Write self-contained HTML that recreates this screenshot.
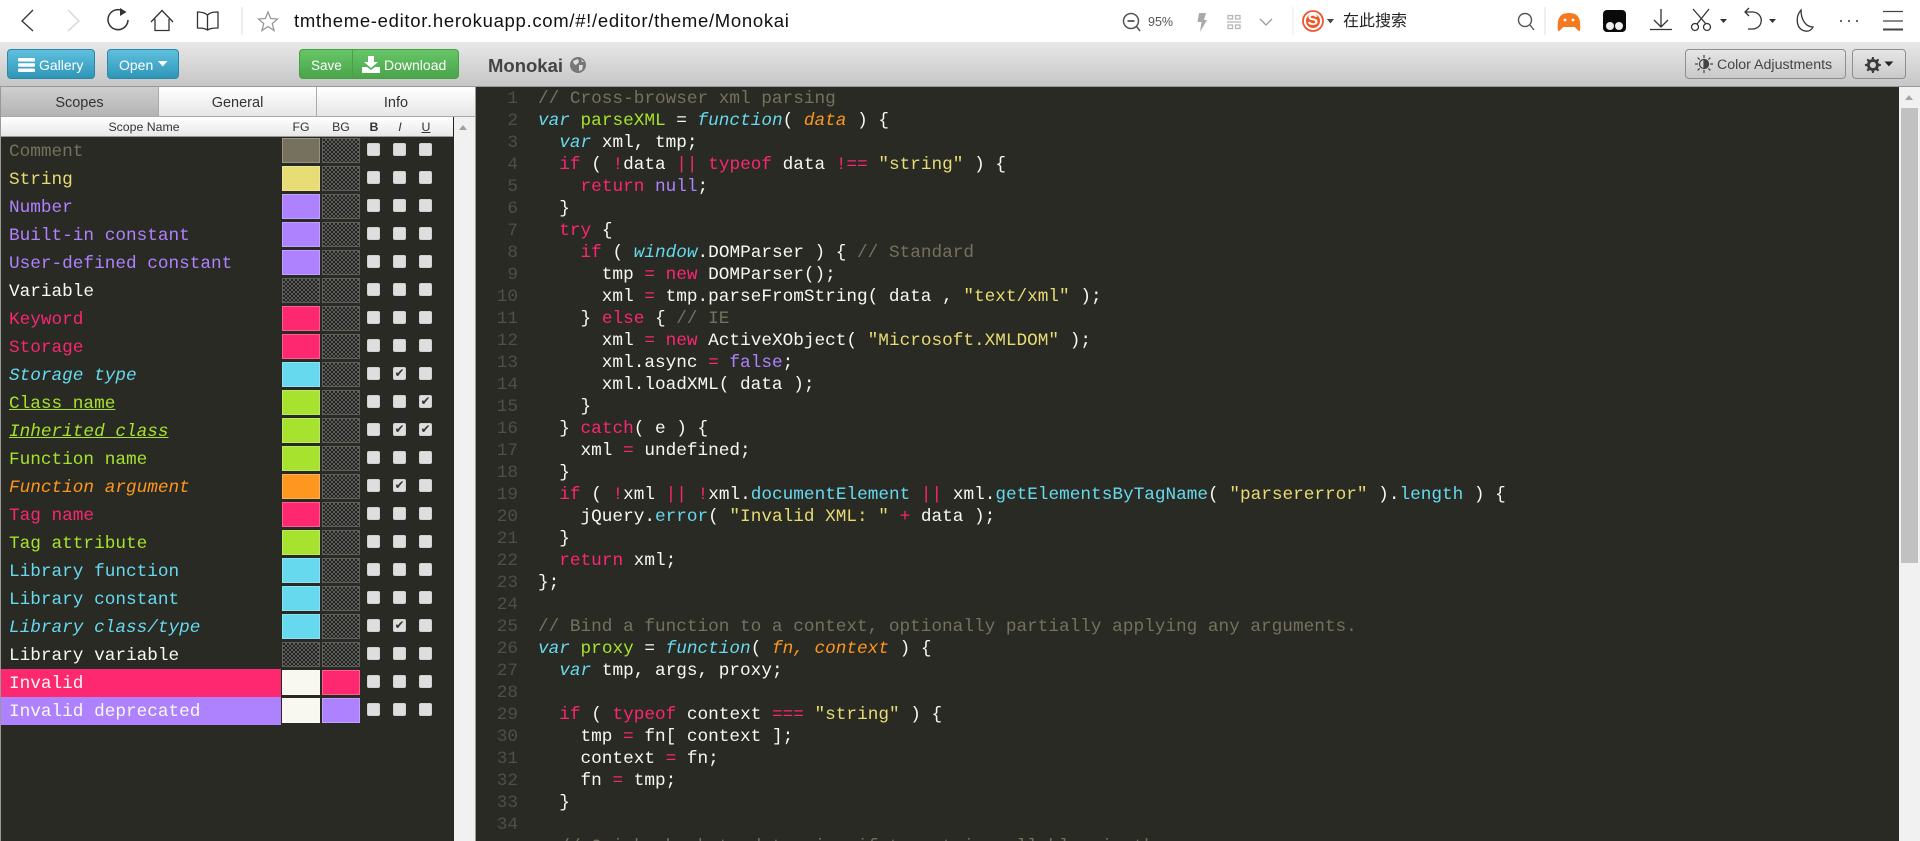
<!DOCTYPE html>
<html lang="en"><head><meta charset="utf-8"><title>Monokai</title>
<style>
html,body{margin:0;padding:0;width:1920px;height:841px;overflow:hidden;background:#292a23}
body{position:relative;font-family:"Liberation Sans","Noto Sans CJK SC",sans-serif}
.abs,.btn,.tab,.h,.row,.sw,.cb,.ln,.cl{position:absolute}
#bar{left:0;top:0;width:1920px;height:42px;background:#fff}
#tb{left:0;top:42px;width:1920px;height:44px;background:linear-gradient(#e8e8e8,#c6c6c6);border-bottom:1px solid #999}
.btn{top:49px;height:30px;box-sizing:border-box;border-radius:4px;color:#fff;font-size:14px;line-height:31px;white-space:nowrap}
.blue{background:linear-gradient(#5fc0de,#2f96b8);border:1px solid #2b88a8}
.green{background:linear-gradient(#66c566,#4ba44b);border:1px solid #46a046}
.gray{background:linear-gradient(#e6e6e6,#cacaca);border:1px solid #8e8e8e;color:#444}
.tab{top:87px;height:29px;box-sizing:border-box;text-align:center;font-size:14.5px;line-height:33px;color:#333;background:linear-gradient(#fff,#e6e6e6);border-right:1px solid #aaa}
.h{top:117px;height:19px;font-size:12.3px;line-height:21px;color:#333;text-align:center}
.row{left:1px;width:280px;height:28px;font:17.73px/31px "Liberation Mono",monospace;padding-left:8px;box-sizing:border-box;white-space:pre}
.sw{width:38px;height:25px;box-sizing:border-box;border:1px solid rgba(255,255,255,.25)}
.t{border:1px solid #5e5f59;background:conic-gradient(#5c5c5c 25%,#23231f 0 50%,#5c5c5c 0 75%,#23231f 0) 0 0/4px 4px}
.cb{width:13px;height:13px;background:#dedede;border-radius:2px;box-shadow:inset 0 0 1px #888;color:#333;font-size:12px;line-height:13px;text-align:center}
.ln{left:476px;width:42px;height:22px;text-align:right;font:17.73px/24px "Liberation Mono",monospace;color:#4e4f48}
.cl{left:538px;height:22px;font:17.73px/24px "Liberation Mono",monospace;color:#f8f8f2;white-space:pre}
.k{color:#f92672}.c{color:#75715e}.s{color:#e6db74}.n{color:#ae81ff}.v{color:#66d9ef;font-style:italic}.g{color:#a6e22e}.a{color:#fd971f;font-style:italic}.b{color:#66d9ef}
</style></head><body>
<div class="abs" id="bar">
<svg class="abs" style="left:0;top:0" width="1920" height="42" fill="none" stroke="#333" stroke-width="1.3">
<path d="M33 10 L22 21 L33 31"/>
<path d="M68 10 L79 21 L68 31" stroke="#d4d4d4"/>
<path d="M125 12.5 A10 10 0 1 0 128 20" stroke-width="1.5"/><path d="M120 8 L126.5 12 L120 16 Z" fill="#333" stroke="none"/>
<path d="M151 22 L162 10.5 L173 22 M155 19 V30.5 H169 V19"/>
<path d="M207.500 15 C204 12 200 12 197.500 12 V28 C201 28 204 28 207.500 30 C211 28 214 28 218 28 V12 C214 12 211 12 207.500 15 V30"/>
<path d="M242 7 V35" stroke="#e4e4e4"/>
<path d="M268 12 L270.700 18.500 L277.500 19 L272.300 23.500 L274 30.500 L268 26.500 L262 30.500 L263.700 23.500 L258.500 19 L265.300 18.500 Z" stroke="#999"/>
<circle cx="1131" cy="21" r="7.500" stroke="#555" stroke-width="1.500"/><path d="M1127.500 21 H1134.500" stroke="#555" stroke-width="1.800"/><path d="M1136.500 26.500 L1140 31" stroke="#555" stroke-width="1.500"/>
<path d="M1199 13 H1206 L1204 20 H1207 L1200 32 L1201.500 22 H1197.500 Z" fill="#aaa" stroke="none"/>
<path d="M1228 15.500 H1232.500 V19 H1228 Z M1235.500 15.500 H1240 V19 H1235.500 Z M1228 25 H1232.500 V28.500 H1228 Z M1235.500 25 H1240 V28.500 H1235.500 Z M1227 22 H1241" stroke="#b5b5b5" stroke-width="1.300"/>
<path d="M1260 19 L1266 25 L1272 19" stroke="#999"/>
<path d="M1293 7 V35" stroke="#eee"/>
<circle cx="1313" cy="21" r="10" stroke="#f0562a" stroke-width="1.800"/><circle cx="1313" cy="21" r="7" fill="#f0562a" stroke="none"/>
<path d="M1327 19 H1334 L1330.500 23.500 Z" fill="#444" stroke="none"/>
<circle cx="1525" cy="20" r="6.500" stroke="#555" stroke-width="1.400"/><path d="M1530 25 L1534 30" stroke="#555" stroke-width="1.400"/>
<path d="M1545 7 V35" stroke="#e6e6e6"/>
<path d="M1558 31 C1557 21 1558 13 1569 13 C1580 13 1581 21 1580 31 C1577 31 1576 27 1574 27 H1564 C1562 27 1561 31 1558 31 Z" fill="#f5791f" stroke="none"/>
<circle cx="1565" cy="20" r="1.400" fill="#fff" stroke="none"/><circle cx="1573" cy="20" r="1.400" fill="#fff" stroke="none"/>
<rect x="1603" y="10" width="23" height="22" rx="4" fill="#0a0a0a" stroke="none"/><circle cx="1610" cy="26" r="4" fill="#eee" stroke="none"/><circle cx="1619" cy="26" r="4" fill="#eee" stroke="none"/>
<path d="M1661 9 V26 M1654 20 L1661 27 L1668 20 M1650 29.500 H1672"/>
<path d="M1693 9 L1706 24 M1709 9 L1697 24"/><circle cx="1695" cy="27" r="3.500"/><circle cx="1707" cy="27" r="3.500"/>
<path d="M1720 19 H1727 L1723.500 23 Z" fill="#333" stroke="none"/>
<path d="M1745 12 H1753 C1764 13 1764 28 1753 29 H1748 M1749 8 L1745 12 L1749 16"/>
<path d="M1769 19 H1776 L1772.500 23 Z" fill="#333" stroke="none"/>
<path d="M1801 10 C1795 17 1796 29 1805 31 C1810 32 1812 29 1813 27 C1806 27 1801 20 1801 10 Z"/>
<circle cx="1841" cy="21" r="1" fill="#333" stroke="none"/><circle cx="1849" cy="21" r="1" fill="#333" stroke="none"/><circle cx="1857" cy="21" r="1" fill="#333" stroke="none"/>
<path d="M1883 11.500 H1903 M1883 21 H1903" stroke="#444" stroke-width="1.300"/><path d="M1883 29.500 H1903" stroke="#444" stroke-width="2"/>
</svg>
<span class="abs" style="left:294px;top:10px;font-size:18.5px;letter-spacing:.69px;line-height:22px;color:#111;white-space:nowrap">tmtheme-editor.herokuapp.com/#!/editor/theme/Monokai</span>
<span class="abs" style="left:1148px;top:14px;font-size:12.500px;line-height:16px;color:#555">95%</span>
<span class="abs" style="left:1307.500px;top:12px;font-size:16px;line-height:18px;font-weight:bold;color:#fff">S</span>
<span class="abs" style="left:1343px;top:13px;font-size:16px;line-height:18px;color:#222;white-space:nowrap">在此搜索</span>
</div>
<div class="abs" id="tb"></div>

<div class="btn blue" style="left:7px;width:88px;padding-left:31px">Gallery
<svg class="abs" style="left:10px;top:8px" width="18" height="14" fill="#fff"><rect width="17" height="3.500" rx="1"/><rect y="5.300" width="17" height="3.500" rx="1"/><rect y="10.500" width="17" height="3.500" rx="1"/></svg></div>
<div class="btn blue" style="left:107px;width:72px;padding-left:11px">Open
<svg class="abs" style="left:50px;top:11px" width="10" height="6" fill="#fff"><path d="M0 0 H9.500 L4.700 5.500 Z"/></svg></div>
<div class="btn green" style="left:299px;width:54px;padding-left:11px;border-radius:4px 0 0 4px;font-size:13.500px">Save</div>
<div class="btn green" style="left:352px;width:107px;padding-left:31px;border-radius:0 4px 4px 0">Download
<svg class="abs" style="left:9px;top:6px" width="18" height="17" fill="#fff"><path d="M6 0 H12 V6 H16 L9 12 L2 6 H6 Z"/><path d="M0 11 H5 L9 14 L13 11 H18 V17 H0 Z"/></svg></div>

<div class="abs" style="left:488px;top:53px;font-size:18.500px;line-height:26px;font-weight:bold;color:#444">Monokai</div>
<svg class="abs" style="left:569px;top:56px" width="18" height="18"><circle cx="9" cy="9" r="8" fill="#777"/><path d="M4 5 L9 3 L10 6 L7 9 L5 8 Z M10 9 L14 9 L13 14 L10 15 Z M12 3 L15 6 L13 6 Z" fill="#ddd"/></svg>
<div class="btn gray" style="left:1685px;width:161px;padding-left:31px;font-size:14.2px">Color Adjustments
<svg class="abs" style="left:9px;top:5px" width="18" height="18" fill="none" stroke="#444" stroke-width="1.200"><circle cx="9" cy="9" r="4.500"/><path d="M9 4.500 A4.500 4.500 0 0 1 9 13.500 Z" fill="#444"/><path d="M9 0 V3 M9 15 V18 M0 9 H3 M15 9 H18 M2.600 2.600 L4.700 4.700 M13.300 13.300 L15.400 15.400 M2.600 15.400 L4.700 13.300 M13.300 4.700 L15.400 2.600"/></svg></div>
<div class="btn gray" style="left:1852px;width:54px">
<svg class="abs" style="left:10px;top:7px" width="34" height="16" viewBox="0 0 34 18"><path d="M8 0 h2 l.5 2.500 l2 .8 l2.200-1.400 l1.400 1.400 l-1.400 2.200 l.8 2 l2.500 .5 v2 l-2.500 .5 l-.8 2 l1.400 2.200 l-1.400 1.400 l-2.200-1.400 l-2 .8 l-.5 2.500 h-2 l-.5-2.500 l-2-.8 l-2.200 1.400 l-1.400-1.400 l1.400-2.200 l-.8-2 l-2.500-.5 v-2 l2.500-.5 l.8-2 l-1.400-2.200 l1.400-1.400 l2.200 1.400 l2-.8 Z M9 5.500 a3.500 3.500 0 1 0 .01 0 Z" fill="#3c3c3c" fill-rule="evenodd"/><path d="M22 5 H32 L27 10.500 Z" fill="#222"/></svg></div>

<div class="abs" style="left:0;top:87px;width:1px;height:754px;background:#999"></div>
<div class="tab" style="left:1px;width:158px;background:linear-gradient(#cfcfcf,#b4b4b4)">Scopes</div>
<div class="tab" style="left:159px;width:158px">General</div>
<div class="tab" style="left:317px;width:158px;border:0">Info</div>
<div class="abs" style="left:1px;top:116px;width:474px;height:1px;background:#aaa"></div>
<div class="abs" style="left:475px;top:87px;width:1px;height:754px;background:#9a9a9a"></div>
<div class="abs" style="left:454px;top:117px;width:21px;height:724px;background:#f1f1f1"></div>
<div class="abs" style="left:453px;top:117px;width:1px;height:20px;background:#222"></div>
<div class="abs" style="left:459px;top:125px;width:0;height:0;border:4.500px solid transparent;border-top:0;border-bottom:5px solid #a0a0a0"></div>
<div class="abs" style="left:1px;top:117px;width:452px;height:19px;background:linear-gradient(#fff,#e8e8e8)"></div>
<div class="abs" style="left:1px;top:136px;width:452px;height:1px;background:#999"></div>
<div class="h" style="left:60px;width:168px">Scope Name</div>
<div class="h" style="left:282px;width:38px">FG</div>
<div class="h" style="left:322px;width:38px">BG</div>
<div class="h" style="left:364px;width:20px;font-weight:bold">B</div>
<div class="h" style="left:390px;width:20px;font-style:italic">I</div>
<div class="h" style="left:416px;width:20px;text-decoration:underline">U</div>

<div class="row" style="top:137px;color:#75715e">Comment</div><div class="sw" style="left:282px;top:138px;background:#75715e"></div><div class="sw t" style="left:322px;top:138px"></div><div class="cb" style="left:367px;top:143px"></div><div class="cb" style="left:393px;top:143px"></div><div class="cb" style="left:419px;top:143px"></div>
<div class="row" style="top:165px;color:#e6db74">String</div><div class="sw" style="left:282px;top:166px;background:#e8dc75"></div><div class="sw t" style="left:322px;top:166px"></div><div class="cb" style="left:367px;top:171px"></div><div class="cb" style="left:393px;top:171px"></div><div class="cb" style="left:419px;top:171px"></div>
<div class="row" style="top:193px;color:#ae81ff">Number</div><div class="sw" style="left:282px;top:194px;background:#ae81ff"></div><div class="sw t" style="left:322px;top:194px"></div><div class="cb" style="left:367px;top:199px"></div><div class="cb" style="left:393px;top:199px"></div><div class="cb" style="left:419px;top:199px"></div>
<div class="row" style="top:221px;color:#ae81ff">Built-in constant</div><div class="sw" style="left:282px;top:222px;background:#ae81ff"></div><div class="sw t" style="left:322px;top:222px"></div><div class="cb" style="left:367px;top:227px"></div><div class="cb" style="left:393px;top:227px"></div><div class="cb" style="left:419px;top:227px"></div>
<div class="row" style="top:249px;color:#ae81ff">User-defined constant</div><div class="sw" style="left:282px;top:250px;background:#ae81ff"></div><div class="sw t" style="left:322px;top:250px"></div><div class="cb" style="left:367px;top:255px"></div><div class="cb" style="left:393px;top:255px"></div><div class="cb" style="left:419px;top:255px"></div>
<div class="row" style="top:277px;color:#f8f8f2">Variable</div><div class="sw t" style="left:282px;top:278px"></div><div class="sw t" style="left:322px;top:278px"></div><div class="cb" style="left:367px;top:283px"></div><div class="cb" style="left:393px;top:283px"></div><div class="cb" style="left:419px;top:283px"></div>
<div class="row" style="top:305px;color:#f92672">Keyword</div><div class="sw" style="left:282px;top:306px;background:#fd2870"></div><div class="sw t" style="left:322px;top:306px"></div><div class="cb" style="left:367px;top:311px"></div><div class="cb" style="left:393px;top:311px"></div><div class="cb" style="left:419px;top:311px"></div>
<div class="row" style="top:333px;color:#f92672">Storage</div><div class="sw" style="left:282px;top:334px;background:#fd2870"></div><div class="sw t" style="left:322px;top:334px"></div><div class="cb" style="left:367px;top:339px"></div><div class="cb" style="left:393px;top:339px"></div><div class="cb" style="left:419px;top:339px"></div>
<div class="row" style="top:361px;color:#66d9ef;font-style:italic">Storage type</div><div class="sw" style="left:282px;top:362px;background:#66d9ef"></div><div class="sw t" style="left:322px;top:362px"></div><div class="cb" style="left:367px;top:367px"></div><div class="cb" style="left:393px;top:367px">✔</div><div class="cb" style="left:419px;top:367px"></div>
<div class="row" style="top:389px;color:#a6e22e;text-decoration:underline">Class name</div><div class="sw" style="left:282px;top:390px;background:#a6e22e"></div><div class="sw t" style="left:322px;top:390px"></div><div class="cb" style="left:367px;top:395px"></div><div class="cb" style="left:393px;top:395px"></div><div class="cb" style="left:419px;top:395px">✔</div>
<div class="row" style="top:417px;color:#a6e22e;font-style:italic;text-decoration:underline">Inherited class</div><div class="sw" style="left:282px;top:418px;background:#a6e22e"></div><div class="sw t" style="left:322px;top:418px"></div><div class="cb" style="left:367px;top:423px"></div><div class="cb" style="left:393px;top:423px">✔</div><div class="cb" style="left:419px;top:423px">✔</div>
<div class="row" style="top:445px;color:#a6e22e">Function name</div><div class="sw" style="left:282px;top:446px;background:#a6e22e"></div><div class="sw t" style="left:322px;top:446px"></div><div class="cb" style="left:367px;top:451px"></div><div class="cb" style="left:393px;top:451px"></div><div class="cb" style="left:419px;top:451px"></div>
<div class="row" style="top:473px;color:#fd971f;font-style:italic">Function argument</div><div class="sw" style="left:282px;top:474px;background:#fd971f"></div><div class="sw t" style="left:322px;top:474px"></div><div class="cb" style="left:367px;top:479px"></div><div class="cb" style="left:393px;top:479px">✔</div><div class="cb" style="left:419px;top:479px"></div>
<div class="row" style="top:501px;color:#f92672">Tag name</div><div class="sw" style="left:282px;top:502px;background:#fd2870"></div><div class="sw t" style="left:322px;top:502px"></div><div class="cb" style="left:367px;top:507px"></div><div class="cb" style="left:393px;top:507px"></div><div class="cb" style="left:419px;top:507px"></div>
<div class="row" style="top:529px;color:#a6e22e">Tag attribute</div><div class="sw" style="left:282px;top:530px;background:#a6e22e"></div><div class="sw t" style="left:322px;top:530px"></div><div class="cb" style="left:367px;top:535px"></div><div class="cb" style="left:393px;top:535px"></div><div class="cb" style="left:419px;top:535px"></div>
<div class="row" style="top:557px;color:#66d9ef">Library function</div><div class="sw" style="left:282px;top:558px;background:#66d9ef"></div><div class="sw t" style="left:322px;top:558px"></div><div class="cb" style="left:367px;top:563px"></div><div class="cb" style="left:393px;top:563px"></div><div class="cb" style="left:419px;top:563px"></div>
<div class="row" style="top:585px;color:#66d9ef">Library constant</div><div class="sw" style="left:282px;top:586px;background:#66d9ef"></div><div class="sw t" style="left:322px;top:586px"></div><div class="cb" style="left:367px;top:591px"></div><div class="cb" style="left:393px;top:591px"></div><div class="cb" style="left:419px;top:591px"></div>
<div class="row" style="top:613px;color:#66d9ef;font-style:italic">Library class/type</div><div class="sw" style="left:282px;top:614px;background:#66d9ef"></div><div class="sw t" style="left:322px;top:614px"></div><div class="cb" style="left:367px;top:619px"></div><div class="cb" style="left:393px;top:619px">✔</div><div class="cb" style="left:419px;top:619px"></div>
<div class="row" style="top:641px;color:#f8f8f2">Library variable</div><div class="sw t" style="left:282px;top:642px"></div><div class="sw t" style="left:322px;top:642px"></div><div class="cb" style="left:367px;top:647px"></div><div class="cb" style="left:393px;top:647px"></div><div class="cb" style="left:419px;top:647px"></div>
<div class="row" style="top:669px;color:#f8f8f0;background:#fd2870">Invalid</div><div class="sw" style="left:282px;top:670px;background:#f8f8f0"></div><div class="sw" style="left:322px;top:670px;background:#fd2870"></div><div class="cb" style="left:367px;top:675px"></div><div class="cb" style="left:393px;top:675px"></div><div class="cb" style="left:419px;top:675px"></div>
<div class="row" style="top:697px;color:#f8f8f0;background:#ae81ff">Invalid deprecated</div><div class="sw" style="left:282px;top:698px;background:#f8f8f0"></div><div class="sw" style="left:322px;top:698px;background:#ae81ff"></div><div class="cb" style="left:367px;top:703px"></div><div class="cb" style="left:393px;top:703px"></div><div class="cb" style="left:419px;top:703px"></div>

<div class="ln" style="top:87px">1</div><div class="cl" style="top:87px"><span class="c">// Cross-browser xml parsing</span></div>
<div class="ln" style="top:109px">2</div><div class="cl" style="top:109px"><span class="v">var</span> <span class="g">parseXML</span> = <span class="v">function</span>( <span class="a">data</span> ) {</div>
<div class="ln" style="top:131px">3</div><div class="cl" style="top:131px">  <span class="v">var</span> xml, tmp;</div>
<div class="ln" style="top:153px">4</div><div class="cl" style="top:153px">  <span class="k">if</span> ( <span class="k">!</span>data <span class="k">||</span> <span class="k">typeof</span> data <span class="k">!==</span> <span class="s">"string"</span> ) {</div>
<div class="ln" style="top:175px">5</div><div class="cl" style="top:175px">    <span class="k">return</span> <span class="n">null</span>;</div>
<div class="ln" style="top:197px">6</div><div class="cl" style="top:197px">  }</div>
<div class="ln" style="top:219px">7</div><div class="cl" style="top:219px">  <span class="k">try</span> {</div>
<div class="ln" style="top:241px">8</div><div class="cl" style="top:241px">    <span class="k">if</span> ( <span class="v">window</span>.DOMParser ) { <span class="c">// Standard</span></div>
<div class="ln" style="top:263px">9</div><div class="cl" style="top:263px">      tmp <span class="k">=</span> <span class="k">new</span> DOMParser();</div>
<div class="ln" style="top:285px">10</div><div class="cl" style="top:285px">      xml <span class="k">=</span> tmp.parseFromString( data , <span class="s">"text/xml"</span> );</div>
<div class="ln" style="top:307px">11</div><div class="cl" style="top:307px">    } <span class="k">else</span> { <span class="c">// IE</span></div>
<div class="ln" style="top:329px">12</div><div class="cl" style="top:329px">      xml <span class="k">=</span> <span class="k">new</span> ActiveXObject( <span class="s">"Microsoft.XMLDOM"</span> );</div>
<div class="ln" style="top:351px">13</div><div class="cl" style="top:351px">      xml.async <span class="k">=</span> <span class="n">false</span>;</div>
<div class="ln" style="top:373px">14</div><div class="cl" style="top:373px">      xml.loadXML( data );</div>
<div class="ln" style="top:395px">15</div><div class="cl" style="top:395px">    }</div>
<div class="ln" style="top:417px">16</div><div class="cl" style="top:417px">  } <span class="k">catch</span>( e ) {</div>
<div class="ln" style="top:439px">17</div><div class="cl" style="top:439px">    xml <span class="k">=</span> undefined;</div>
<div class="ln" style="top:461px">18</div><div class="cl" style="top:461px">  }</div>
<div class="ln" style="top:483px">19</div><div class="cl" style="top:483px">  <span class="k">if</span> ( <span class="k">!</span>xml <span class="k">||</span> <span class="k">!</span>xml.<span class="b">documentElement</span> <span class="k">||</span> xml.<span class="b">getElementsByTagName</span>( <span class="s">"parsererror"</span> ).<span class="b">length</span> ) {</div>
<div class="ln" style="top:505px">20</div><div class="cl" style="top:505px">    jQuery.<span class="b">error</span>( <span class="s">"Invalid XML: "</span> <span class="k">+</span> data );</div>
<div class="ln" style="top:527px">21</div><div class="cl" style="top:527px">  }</div>
<div class="ln" style="top:549px">22</div><div class="cl" style="top:549px">  <span class="k">return</span> xml;</div>
<div class="ln" style="top:571px">23</div><div class="cl" style="top:571px">};</div>
<div class="ln" style="top:593px">24</div>
<div class="ln" style="top:615px">25</div><div class="cl" style="top:615px"><span class="c">// Bind a function to a context, optionally partially applying any arguments.</span></div>
<div class="ln" style="top:637px">26</div><div class="cl" style="top:637px"><span class="v">var</span> <span class="g">proxy</span> = <span class="v">function</span>( <span class="a">fn, context</span> ) {</div>
<div class="ln" style="top:659px">27</div><div class="cl" style="top:659px">  <span class="v">var</span> tmp, args, proxy;</div>
<div class="ln" style="top:681px">28</div>
<div class="ln" style="top:703px">29</div><div class="cl" style="top:703px">  <span class="k">if</span> ( <span class="k">typeof</span> context <span class="k">===</span> <span class="s">"string"</span> ) {</div>
<div class="ln" style="top:725px">30</div><div class="cl" style="top:725px">    tmp <span class="k">=</span> fn[ context ];</div>
<div class="ln" style="top:747px">31</div><div class="cl" style="top:747px">    context <span class="k">=</span> fn;</div>
<div class="ln" style="top:769px">32</div><div class="cl" style="top:769px">    fn <span class="k">=</span> tmp;</div>
<div class="ln" style="top:791px">33</div><div class="cl" style="top:791px">  }</div>
<div class="ln" style="top:813px">34</div>
<div class="abs" style="left:476px;top:835px;width:1423px;height:6px;overflow:hidden"><div class="cl" style="left:62px;top:0"><span class="c">  // Quick check to determine if target is callable, in the spec</span></div></div>

<div class="abs" style="left:1899px;top:87px;width:21px;height:754px;background:#f1f1f1"></div>
<div class="abs" style="left:1904.500px;top:95px;width:0;height:0;border:4.500px solid transparent;border-top:0;border-bottom:5px solid #a6a6a6"></div>
<div class="abs" style="left:1901px;top:108px;width:17px;height:455px;background:#c1c1c1"></div>
</body></html>
